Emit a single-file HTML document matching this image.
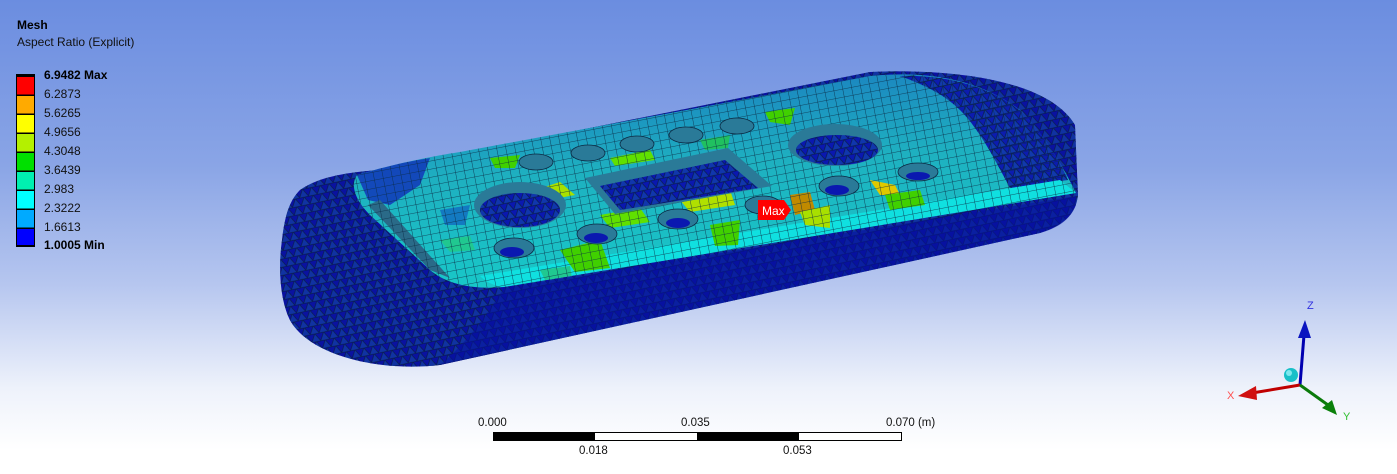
<!DOCTYPE html>
<html><head><meta charset="utf-8"><style>
html,body{margin:0;padding:0;width:1397px;height:474px;overflow:hidden}
body{background:linear-gradient(to bottom,#6b8de0 0%,#8aa5e6 35%,#b6c6ef 60%,#eef2fb 82%,#ffffff 95%);font-family:"Liberation Sans",sans-serif}
svg{position:absolute;left:0;top:0}
</style></head><body>
<svg width="1397" height="474" viewBox="0 0 1397 474" xmlns="http://www.w3.org/2000/svg" font-family="Liberation Sans, sans-serif">
<defs>
<pattern id="tri" width="9" height="8" patternUnits="userSpaceOnUse" patternTransform="rotate(-12)">
<path d="M0 0H9M0 8H9M0 8L4.5 0L9 8" stroke="#06104a" stroke-width="0.8" fill="none"/>
<path d="M4.5 0L9 8H0Z" fill="#1f7aa8" opacity="0.3"/>
</pattern>
<pattern id="quad" width="9" height="8" patternUnits="userSpaceOnUse" patternTransform="rotate(-11)">
<path d="M0 0H9M0 0V8" stroke="#0a2a44" stroke-width="0.8" fill="none"/>
</pattern>
<linearGradient id="top" x1="0" y1="0" x2="0.2" y2="1">
<stop offset="0" stop-color="#1a78c0"/><stop offset="0.5" stop-color="#1eb0c0"/><stop offset="1" stop-color="#18c8c8"/>
</linearGradient>
<clipPath id="plat"><path d="M357,175 C380,168 420,158 460,152 L870,76 C930,70 980,80 1020,110 C1040,130 1060,160 1076,193 L504,287 C470,290 445,283 430,270 L370,215 C355,200 350,185 357,175Z"/></clipPath>
</defs>

<text x="17" y="29" font-size="12" font-weight="bold" fill="#000">Mesh</text>
<text x="17" y="46" font-size="12" fill="#111">Aspect Ratio (Explicit)</text>
<rect x="16" y="74" width="19" height="173" fill="#000"/>
<rect x="17" y="77" width="17" height="17.5" fill="#ff0000"/>
<rect x="17" y="96" width="17" height="17.5" fill="#ffaa00"/>
<rect x="17" y="115" width="17" height="17.5" fill="#ffff00"/>
<rect x="17" y="134" width="17" height="17.5" fill="#b4f000"/>
<rect x="17" y="153" width="17" height="17.5" fill="#00e000"/>
<rect x="17" y="172" width="17" height="17.5" fill="#00f0b0"/>
<rect x="17" y="191" width="17" height="17.5" fill="#00ffff"/>
<rect x="17" y="210" width="17" height="17.5" fill="#00aaff"/>
<rect x="17" y="229" width="17" height="16" fill="#0000ff"/>
<g font-size="12" fill="#111">
<text x="44" y="79" font-weight="bold" fill="#000">6.9482 Max</text>
<text x="44" y="98">6.2873</text>
<text x="44" y="117">5.6265</text>
<text x="44" y="136">4.9656</text>
<text x="44" y="155">4.3048</text>
<text x="44" y="174">3.6439</text>
<text x="44" y="193">2.983</text>
<text x="44" y="212">2.3222</text>
<text x="44" y="231">1.6613</text>
<text x="44" y="249" font-weight="bold" fill="#000">1.0005 Min</text>
</g>

<path d="M300,190 C320,176 350,172 380,170 L870,72 C960,68 1050,82 1075,125 L1078,195 C1076,215 1062,226 1040,233 L440,365 C380,372 312,356 291,322 C280,302 278,268 282,240 C285,214 290,200 300,190 Z" fill="#0a12a0"/>
<path d="M300,190 C320,176 350,172 380,170 L870,72 C960,68 1050,82 1075,125 L1078,195 C1076,215 1062,226 1040,233 L440,365 C380,372 312,356 291,322 C280,302 278,268 282,240 C285,214 290,200 300,190 Z" fill="url(#tri)"/>
<path d="M504,288 L1076,196 L1076,205 C1070,220 1058,228 1040,233 L440,365 C470,340 490,310 504,288Z" fill="#0610a0" opacity="0.55"/>

<path d="M357,175 C380,168 420,158 460,152 L870,76 C930,70 980,80 1020,110 C1040,130 1060,160 1076,193 L504,287 C470,290 445,283 430,270 L370,215 C355,200 350,185 357,175Z" fill="url(#top)"/>
<g clip-path="url(#plat)">
<path d="M900,76 C960,74 1010,95 1035,125 C1050,145 1062,165 1068,180 L1010,188 C995,160 980,130 960,110 C945,95 925,85 900,76Z" fill="#0c1cb0"/>
<path d="M900,76 C960,74 1010,95 1035,125 C1050,145 1062,165 1068,180 L1010,188 C995,160 980,130 960,110 C945,95 925,85 900,76Z" fill="url(#tri)"/>
<path d="M357,175 C375,168 400,163 430,158 L420,185 L390,205 L368,200Z" fill="#1030b8" opacity="0.8"/>
<path d="M440,210 L470,205 L465,225 L445,225Z" fill="#1060c0" opacity="0.7"/>
<path d="M480,276 L1060,180 L1076,193 L504,287 C494,286 486,282 480,276Z" fill="#10e0e0"/>
<path d="M368,205 L430,270 L450,278 L380,200Z" fill="#2a6a88"/>
<path d="M535,190 L560,182 L575,195 L548,200Z" fill="#a8e000"/>
<path d="M600,215 L640,208 L650,222 L610,228Z" fill="#60e000"/>
<path d="M560,250 L600,240 L610,268 L575,272Z" fill="#40d000"/>
<path d="M680,200 L730,190 L735,205 L690,212Z" fill="#b0e000"/>
<path d="M710,225 L740,220 L738,245 L715,246Z" fill="#40d000"/>
<path d="M790,195 L810,192 L815,210 L795,215Z" fill="#c08a00"/>
<path d="M800,212 L830,205 L830,228 L805,225Z" fill="#a8e000"/>
<path d="M870,180 L895,185 L900,195 L880,195Z" fill="#e0c800"/>
<path d="M885,195 L920,190 L925,205 L890,210Z" fill="#40d000"/>
<path d="M765,112 L795,108 L790,125 L770,122Z" fill="#40d000"/>
<path d="M610,158 L650,150 L655,160 L615,166Z" fill="#60e000"/>
<path d="M490,158 L520,155 L515,168 L495,168Z" fill="#40d000"/>
<path d="M700,140 L730,135 L728,148 L705,150Z" fill="#20c060"/>
<path d="M440,240 L470,236 L475,250 L450,252Z" fill="#20c890"/>
<path d="M540,270 L570,266 L572,278 L545,280Z" fill="#20c890"/>
<rect x="340" y="60" width="760" height="240" fill="url(#quad)"/>
</g>

<path d="M585,178 L728,148 L772,186 L615,214Z" fill="#2a7a98"/>
<path d="M600,186 L725,160 L758,188 L620,210Z" fill="#0a18b0"/>
<path d="M600,186 L725,160 L758,188 L620,210Z" fill="url(#tri)"/>

<ellipse cx="520" cy="205" rx="46" ry="23" fill="#2a7a98"/>
<ellipse cx="520" cy="210" rx="40" ry="17" fill="#0a18b0"/>
<ellipse cx="520" cy="210" rx="40" ry="17" fill="url(#tri)"/>
<ellipse cx="835" cy="145" rx="47" ry="21" fill="#2a7a98"/>
<ellipse cx="837" cy="150" rx="41" ry="15" fill="#0a18b0"/>
<ellipse cx="837" cy="150" rx="41" ry="15" fill="url(#tri)"/>
<g fill="#2a7a98" stroke="#0a2a44" stroke-width="0.8">
<ellipse cx="514" cy="248" rx="20" ry="10"/>
<ellipse cx="597" cy="234" rx="20" ry="10"/>
<ellipse cx="678" cy="219" rx="20" ry="10"/>
<ellipse cx="763" cy="205" rx="18" ry="9"/>
<ellipse cx="536" cy="162" rx="17" ry="8"/>
<ellipse cx="588" cy="153" rx="17" ry="8"/>
<ellipse cx="637" cy="144" rx="17" ry="8"/>
<ellipse cx="686" cy="135" rx="17" ry="8"/>
<ellipse cx="737" cy="126" rx="17" ry="8"/>
<ellipse cx="839" cy="186" rx="20" ry="10"/>
<ellipse cx="918" cy="172" rx="20" ry="9"/>
</g>
<g fill="#0a18b0">
<ellipse cx="512" cy="252" rx="12" ry="5"/>
<ellipse cx="596" cy="238" rx="12" ry="5"/>
<ellipse cx="678" cy="223" rx="12" ry="5"/>
<ellipse cx="837" cy="190" rx="12" ry="5"/>
<ellipse cx="918" cy="176" rx="12" ry="4"/>
</g>

<path d="M758,200 L784,200 L791,210 L784,220 L758,220Z" fill="#ff0000"/>
<text x="762" y="215" font-size="12" fill="#fff">Max</text>

<rect x="493" y="432" width="409" height="9" fill="#000"/>
<rect x="595" y="433" width="102" height="7" fill="#fff"/>
<rect x="799" y="433" width="102" height="7" fill="#fff"/>
<g font-size="11.5" fill="#111">
<text x="478" y="426">0.000</text>
<text x="681" y="426">0.035</text>
<text x="886" y="426">0.070 (m)</text>
<text x="579" y="454">0.018</text>
<text x="783" y="454">0.053</text>
</g>

<line x1="1300" y1="385" x2="1304" y2="335" stroke="#0000b0" stroke-width="3"/>
<path d="M1298,338 L1305,320 L1311,338Z" fill="#0a14c0"/>
<line x1="1300" y1="385" x2="1252" y2="393" stroke="#c00000" stroke-width="3"/>
<path d="M1256,386 L1238,396 L1257,400Z" fill="#d01010"/>
<line x1="1300" y1="385" x2="1328" y2="405" stroke="#0a7a0a" stroke-width="3"/>
<path d="M1322,408 L1337,415 L1332,400Z" fill="#0a800a"/>
<circle cx="1291" cy="375" r="7" fill="#18c0c8"/>
<circle cx="1289" cy="373" r="3" fill="#7ee8ee"/>
<text x="1307" y="309" font-size="11" fill="#3030e0">Z</text>
<text x="1227" y="399" font-size="11" fill="#ff5050">X</text>
<text x="1343" y="420" font-size="11" fill="#30c030">Y</text>
</svg>
</body></html>
